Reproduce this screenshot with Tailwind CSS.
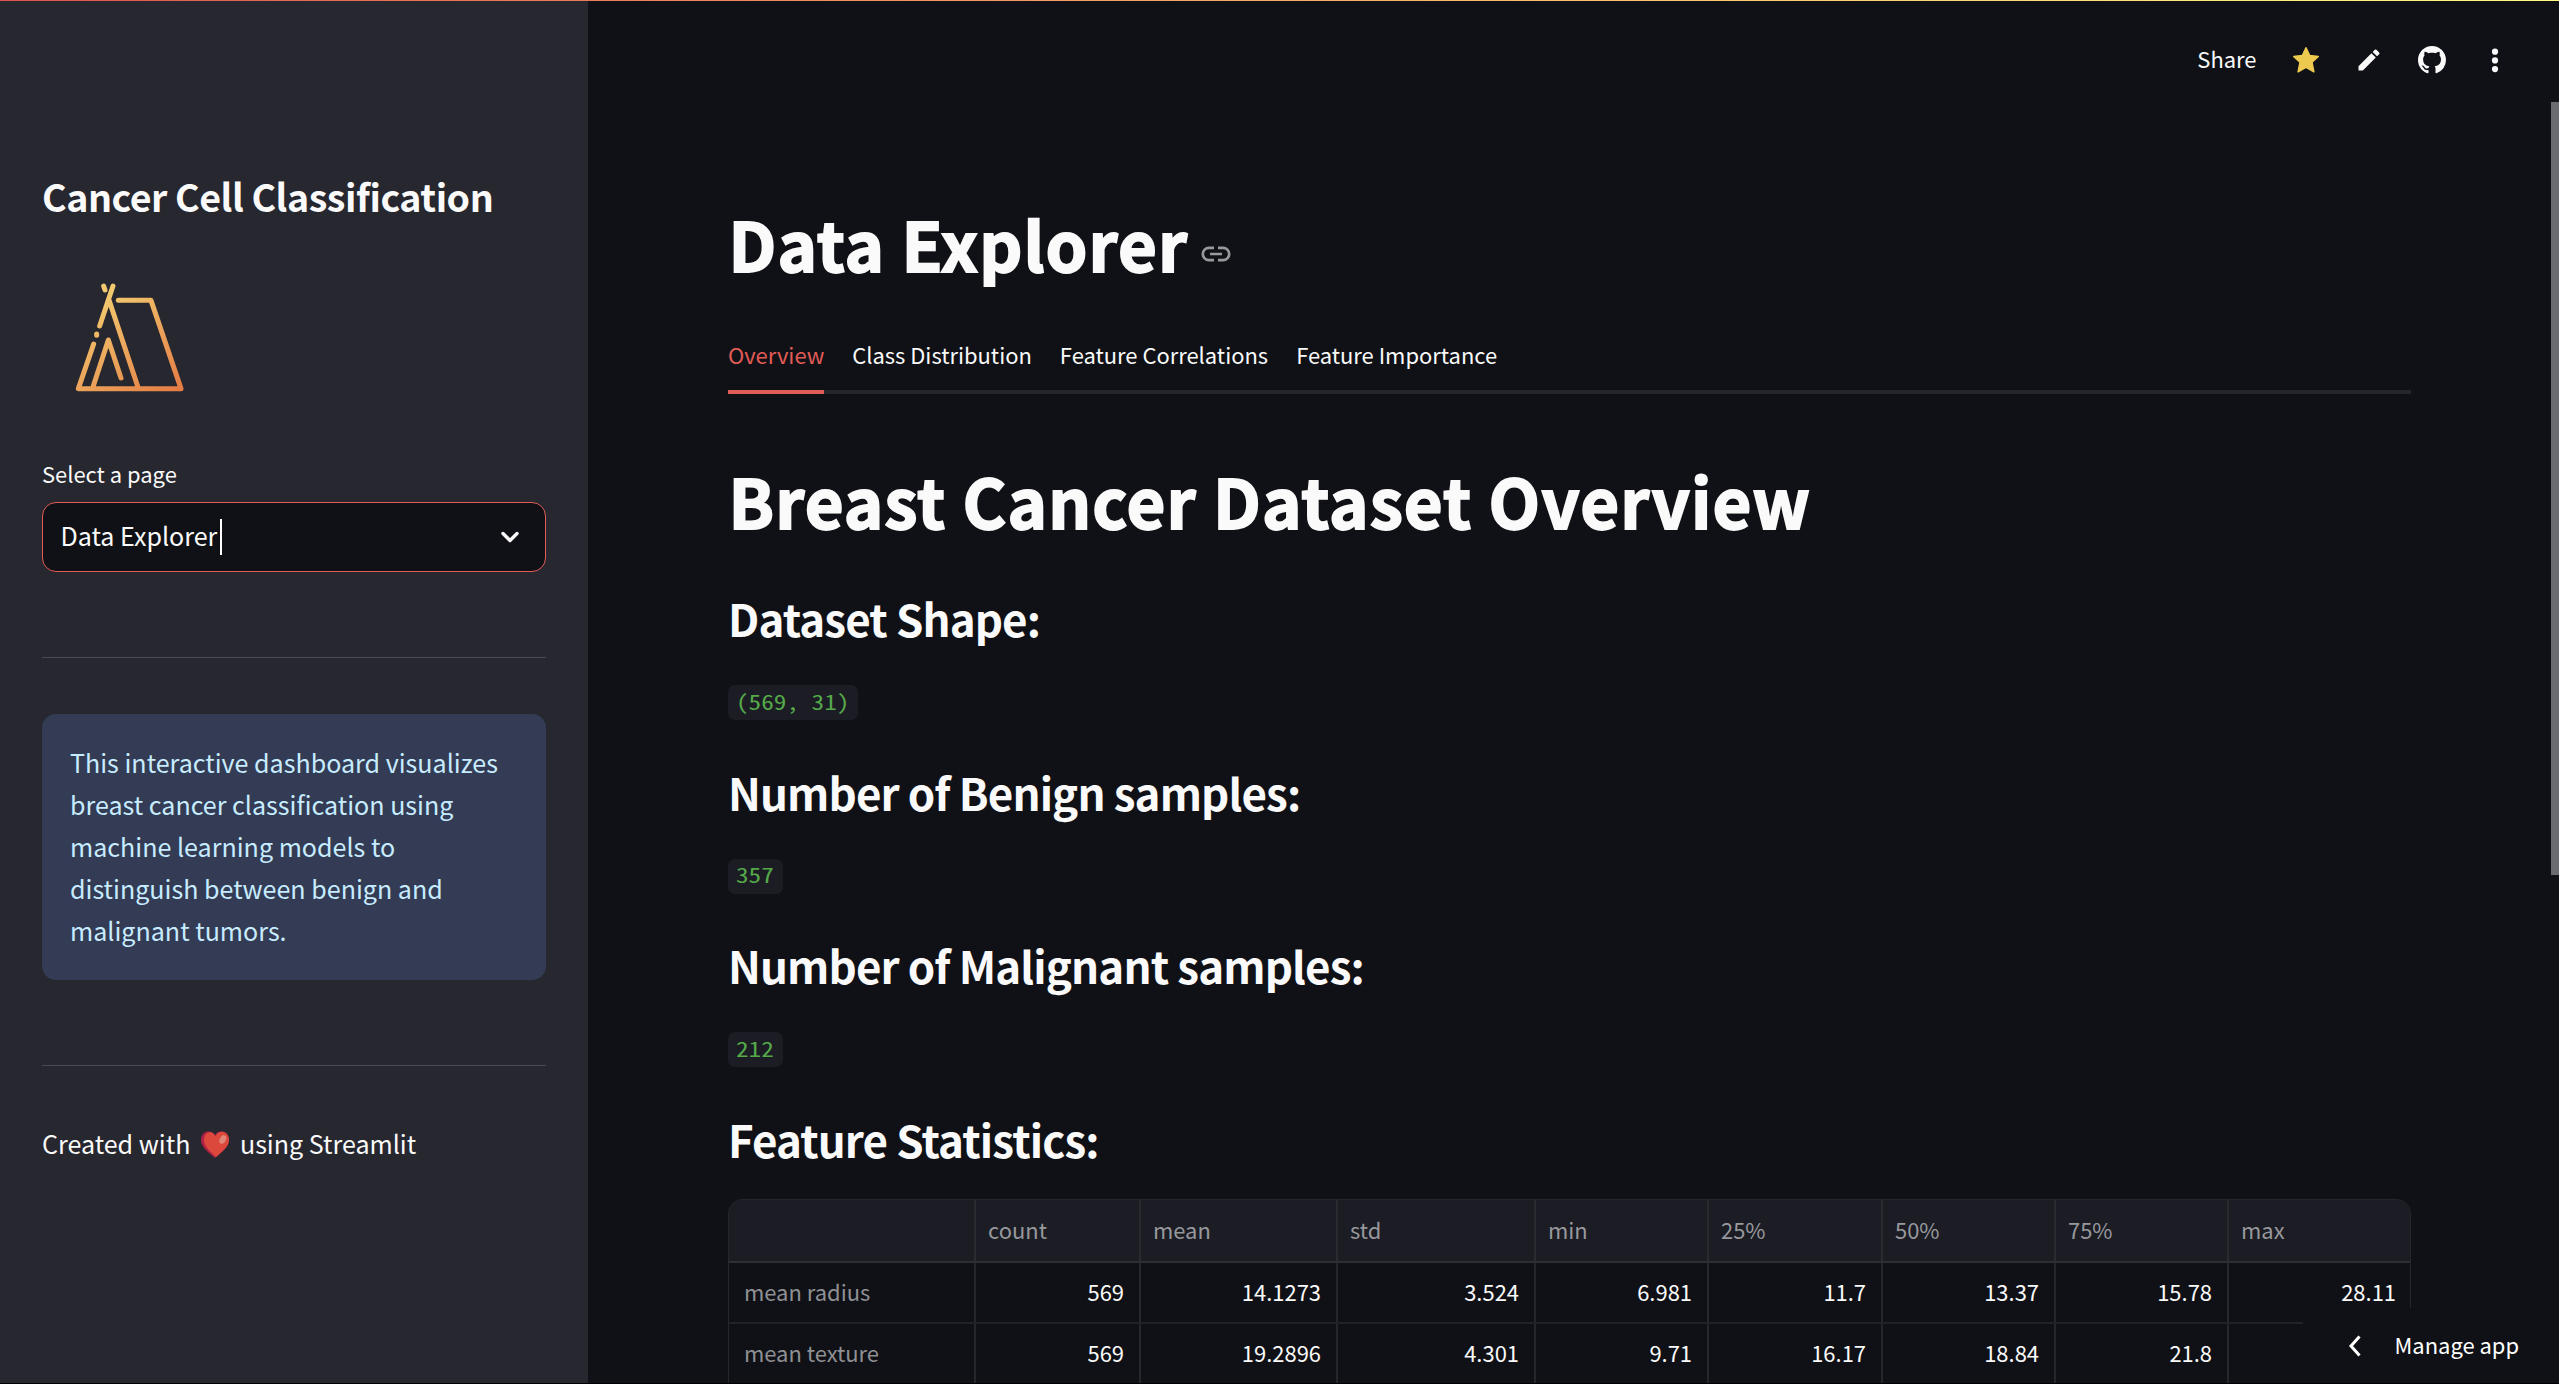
<!DOCTYPE html>
<html lang="en">
<head>
<meta charset="utf-8">
<title>Cancer Cell Classification</title>
<script src="https://cdn.jsdelivr.net/npm/@tailwindcss/browser@4"></script>
</head>
<body class="relative flex h-[1384px] w-[2559px] overflow-hidden bg-[#101116] font-['Noto_Sans_CJK_SC',sans-serif] text-[25.07px] text-[#fafafa]">

<aside class="flex h-[1384px] w-[588px] shrink-0 flex-col bg-[#27272f] px-[42px] pt-[167px]">
  <h2 class="h-[58px] text-[37.6px] leading-[58px] font-semibold tracking-[-0.47px] whitespace-nowrap">Cancer Cell Classification</h2>
  <svg class="mt-[45px] ml-[18px] h-[130px] w-[140px] shrink-0" viewBox="0 0 420 390" fill="none" stroke="url(#tent)" stroke-width="15" stroke-linecap="round" stroke-linejoin="round">
    <defs><linearGradient id="tent" gradientUnits="userSpaceOnUse" x1="120" y1="90" x2="330" y2="370"><stop offset="0" stop-color="#f2c96f"/><stop offset="1" stop-color="#e57e45"/></linearGradient></defs>
    <path d="M131 48L135 60M159 48L119 168M110 192L110 196M101 222L55 356H363L273 91H175M147 90L234 352M98 354L145 210L183 324"/>
  </svg>
  <div class="mt-[56px] h-[36px] text-[21.94px] leading-[36px]">Select a page</div>
  <div class="mt-[10px] flex h-[70px] shrink-0 items-center rounded-[14px] border border-[#e25c57] bg-[#101116] pr-[25px] pl-[17.5px]">
    <span class="pb-[2px] whitespace-nowrap">Data Explorer</span>
    <span class="ml-[3px] h-[36px] w-[2px] bg-white"></span>
    <svg class="ml-auto h-[14px] w-[20px]" viewBox="0 0 20 14" fill="none" stroke="#fafafa" stroke-width="3.4" stroke-linecap="round" stroke-linejoin="round"><path d="M3 3.5L10 10.5L17 3.5"/></svg>
  </div>
  <hr class="mt-[85px] h-px border-0 bg-[#4b4c54]">
  <div class="mt-[56px] h-[266px] shrink-0 rounded-[14px] bg-[#333c54] px-[28px] pt-[27px] leading-[42px] whitespace-nowrap text-[#c7ebff]">This interactive dashboard visualizes<br>breast cancer classification using<br>machine learning models to<br>distinguish between benign and<br>malignant tumors.</div>
  <hr class="mt-[85px] h-px border-0 bg-[#4b4c54]">
  <div class="mt-[56px] flex h-[42px] items-center leading-[42px] whitespace-nowrap">
    <span>Created with</span>
    <svg class="mt-[3px] mr-[11px] ml-[10.5px] h-[28px] w-[28px]" viewBox="0 0 28 28"><path d="M14 27C10 23 0 17 0 9C0 3 4 .5 7.500 .5C10.500 .5 13 2 14 4.500C15 2 17.500 .5 20.500 .5C24 .5 28 3 28 9C28 17 18 23 14 27Z" fill="#af2145"/><path d="M15 26C11.500 22 3 17 3 9C3 4 6 1.200 8.800 1.200C11.500 1.200 13.500 3 14.500 5.500C15.500 2.500 18 .8 20.500 .8C24 .8 28 3 28 9C28 16.500 19 22 15 26Z" fill="#dc483c"/><ellipse cx="21.800" cy="8.500" rx="3" ry="4.600" transform="rotate(28 21.800 8.500)" fill="#e08777"/></svg>
    <span>using Streamlit</span>
  </div>
</aside>

<main class="h-[1384px] w-[1963px] shrink-0 overflow-hidden pl-[140px]">
  <header class="flex h-[120px] items-center justify-end pr-[42.5px]">
    <span class="mr-[35px] pb-[2px] text-[21.94px]">Share</span>
    <svg class="mr-[35px] h-[28px] w-[28px]" viewBox="0 0 28 28" fill="#edc94f" stroke="#edc94f" stroke-width="1.500" stroke-linejoin="round"><path d="M14 1.700L17.700 9.600L26.300 10.400L20 16.300L21.900 25.800L14 21.300L6.100 25.800L8 16.300L1.700 10.400L10.300 9.600Z"/></svg>
    <svg class="mr-[35px] h-[28px] w-[28px]" viewBox="0 0 24 24" fill="#fafafa"><path d="M3 17.250V21h3.750L17.810 9.940l-3.750-3.750L3 17.250zM20.710 7.040a1 1 0 0 0 0-1.410l-2.340-2.340a1 1 0 0 0-1.410 0l-1.830 1.830 3.750 3.750 1.830-1.830z"/></svg>
    <svg class="mr-[35px] h-[28px] w-[28px]" viewBox="0 0 16 16" fill="#fafafa"><path d="M8 0C3.580 0 0 3.580 0 8c0 3.540 2.290 6.530 5.470 7.590.4.070.55-.17.55-.38 0-.19-.01-.82-.01-1.490-2.010.37-2.530-.49-2.690-.94-.09-.23-.48-.94-.82-1.130-.28-.15-.68-.52-.01-.53.63-.01 1.080.58 1.230.82.72 1.210 1.870.87 2.330.66.07-.52.28-.87.51-1.070-1.780-.2-3.640-.89-3.640-3.950 0-.87.31-1.590.82-2.150-.08-.2-.36-1.020.08-2.120 0 0 .67-.21 2.200.82.64-.18 1.320-.27 2-.27s1.360.09 2 .27c1.530-1.040 2.200-.82 2.200-.82.44 1.100.16 1.920.08 2.120.51.56.82 1.270.82 2.150 0 3.070-1.870 3.750-3.650 3.950.29.25.54.73.54 1.480 0 1.070-.01 1.930-.01 2.200 0 .21.15.46.55.38A8.010 8.010 0 0 0 16 8c0-4.420-3.580-8-8-8z"/></svg>
    <svg class="h-[28px] w-[28px]" viewBox="0 0 28 28" fill="#fafafa"><circle cx="14" cy="5.700" r="3.100"/><circle cx="14" cy="14.400" r="3.100"/><circle cx="14" cy="23.100" r="3.100"/></svg>
  </header>

  <div class="mt-[77px] flex h-[92px] w-[1683px] items-center">
    <h1 class="pl-[0.5px] text-[67px] leading-[92px] font-bold tracking-[1.05px] whitespace-nowrap [-webkit-text-stroke:1.8px_#fafafa]">Data Explorer</h1>
    <svg class="mt-[22px] ml-[13px] h-[16px] w-[30px]" viewBox="0 0 30 16" fill="none" stroke="#97989b" stroke-width="2.700"><path d="M13 1.800H8A6.200 6.200 0 0 0 8 14.200H13M17 1.800H22A6.200 6.200 0 0 1 22 14.200H17M9 8H21"/></svg>
  </div>

  <nav class="mt-[48px] flex h-[57px] w-[1683px] gap-[28px] border-b-4 border-[#26272c] text-[21.94px] leading-[36px] whitespace-nowrap">
    <span class="h-[57px] border-b-4 border-[#e25c57] text-[#e25c57]">Overview</span>
    <span>Class Distribution</span>
    <span>Feature Correlations</span>
    <span>Feature Importance</span>
  </nav>

  <h1 class="mt-[60px] h-[92px] pl-[0.5px] text-[67px] leading-[92px] font-bold tracking-[1.05px] whitespace-nowrap [-webkit-text-stroke:1.8px_#fafafa]">Breast Cancer Dataset Overview</h1>

  <section class="mt-[43px] h-[173.5px]">
    <h2 class="text-[43.9px] leading-[58px] font-semibold tracking-[-0.88px]">Dataset Shape:</h2>
    <code class="mt-[38px] block h-[35px] w-[130px] rounded-[7px] bg-[#1b1c24] pl-[8px] font-['Noto_Sans_Mono_CJK_SC','Liberation_Mono',monospace] text-[22px] leading-[32px] text-[#55a949]"><span class="inline-block origin-left scale-x-[1.145] scale-y-[0.94] whitespace-nowrap">(569, 31)</span></code>
  </section>
  <section class="h-[173.5px]">
    <h2 class="text-[43.9px] leading-[58px] font-semibold tracking-[-0.88px]">Number of Benign samples:</h2>
    <code class="mt-[38px] block h-[35px] w-[55px] rounded-[7px] bg-[#1b1c24] pl-[8px] font-['Noto_Sans_Mono_CJK_SC','Liberation_Mono',monospace] text-[22px] leading-[31px] text-[#55a949]"><span class="inline-block origin-left scale-x-[1.145] scale-y-[0.94] whitespace-nowrap">357</span></code>
  </section>
  <section class="h-[173.5px]">
    <h2 class="text-[43.9px] leading-[58px] font-semibold tracking-[-0.88px]">Number of Malignant samples:</h2>
    <code class="mt-[38px] block h-[35px] w-[55px] rounded-[7px] bg-[#1b1c24] pl-[8px] font-['Noto_Sans_Mono_CJK_SC','Liberation_Mono',monospace] text-[22px] leading-[32px] text-[#55a949]"><span class="inline-block origin-left scale-x-[1.145] scale-y-[0.94] whitespace-nowrap">212</span></code>
  </section>
  <h2 class="text-[43.9px] leading-[58px] font-semibold tracking-[-0.88px]">Feature Statistics:</h2>

  <div class="mt-[31px] h-[300px] w-[1683px] overflow-hidden rounded-[14px] border border-[#26272c] text-[21.94px] whitespace-nowrap">
    <div class="grid h-[63px] grid-cols-[247px_165px_197px_198px_173px_174px_173px_173px_1fr] border-b-2 border-[#2e2f35] bg-[#1b1c24] leading-[60px] text-[#97989c] *:border-r-2 *:border-[#2a2b31] *:pl-[12px] *:last:border-r-0">
      <span></span><span>count</span><span>mean</span><span>std</span><span>min</span><span>25%</span><span>50%</span><span>75%</span><span>max</span>
    </div>
    <div class="grid h-[61px] grid-cols-[247px_165px_197px_198px_173px_174px_173px_173px_1fr] border-b-2 border-[#212227] text-right leading-[57px] *:border-r-2 *:border-[#26272c] *:pr-[15px] *:last:border-r-0 *:last:pr-[14px]">
      <span class="pl-[15px] text-left text-[#8f9094]">mean radius</span><span>569</span><span>14.1273</span><span>3.524</span><span>6.981</span><span>11.7</span><span>13.37</span><span>15.78</span><span>28.11</span>
    </div>
    <div class="grid h-[61px] grid-cols-[247px_165px_197px_198px_173px_174px_173px_173px_1fr] border-b-2 border-[#212227] text-right leading-[57px] *:border-r-2 *:border-[#26272c] *:pr-[15px] *:last:border-r-0">
      <span class="pl-[15px] text-left text-[#8f9094]">mean texture</span><span>569</span><span>19.2896</span><span>4.301</span><span>9.71</span><span>16.17</span><span>18.84</span><span>21.8</span><span></span>
    </div>
  </div>
</main>

<!-- scrollbar -->
<div class="mt-[102px] h-[773px] w-[8px] shrink-0 bg-[#6b6c70]"></div>

<!-- top decoration and bottom edge -->
<div class="absolute top-0 left-0 h-px w-full bg-linear-to-r from-[#e0524f] to-[#fffd80]"></div>
<div class="absolute bottom-0 left-0 h-px w-full bg-black"></div>

<!-- manage app button -->
<div class="absolute top-[1308px] left-[2303px] flex h-[75px] w-[256px] items-center bg-[#101116] pl-[45px] text-[21.94px]">
  <svg class="h-[22px] w-[14px]" viewBox="0 0 14 22" fill="none" stroke="#fff" stroke-width="3" stroke-linecap="butt"><path d="M11.500 1.500L3 11L11.500 20.500"/></svg>
  <span class="ml-[32.500px] whitespace-nowrap text-white">Manage app</span>
</div>
</body>
</html>
